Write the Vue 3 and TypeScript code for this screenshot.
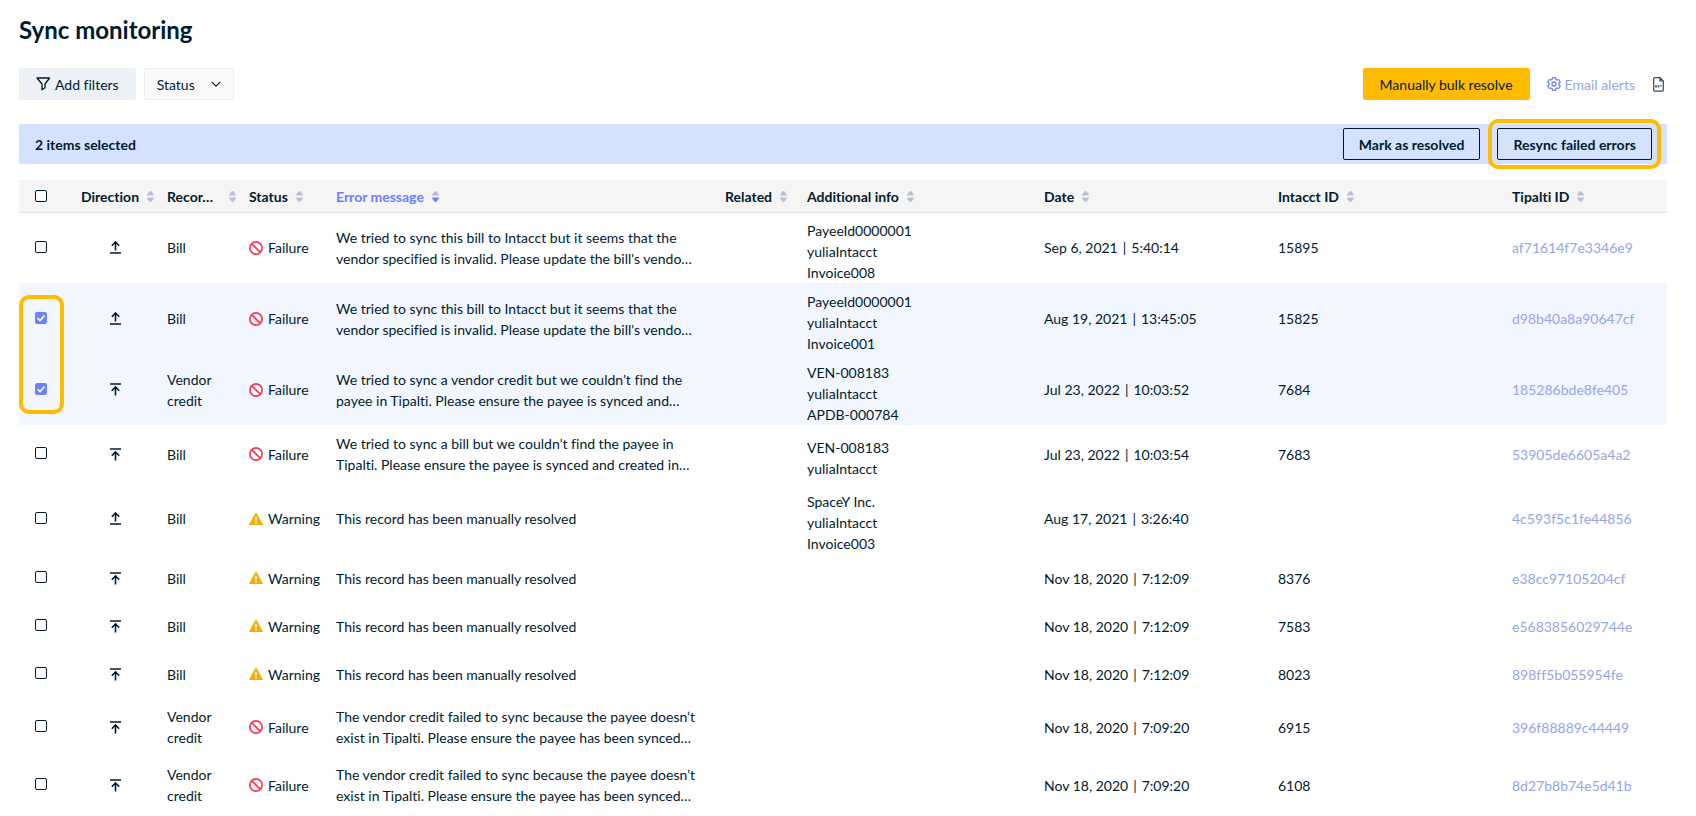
<script setup lang="ts">
import { computed, ref } from 'vue'

interface Row {
  checked: boolean
  direction: 'out' | 'in'
  record: string
  status: 'Failure' | 'Warning'
  message: string
  info: string[]
  date: string
  time: string
  intacct: string
  tipalti: string
}

interface Column {
  key: string
  label: string
  active?: boolean
}

const columns: Column[] = [
  { key: 'direction', label: 'Direction' },
  { key: 'record', label: 'Recor…' },
  { key: 'status', label: 'Status' },
  { key: 'message', label: 'Error message', active: true },
  { key: 'related', label: 'Related' },
  { key: 'info', label: 'Additional info' },
  { key: 'date', label: 'Date' },
  { key: 'intacct', label: 'Intacct ID' },
  { key: 'tipalti', label: 'Tipalti ID' },
]

const invalidVendor =
  "We tried to sync this bill to Intacct but it seems that the vendor specified is invalid. Please update the bill's vendo…"
const resolved = 'This record has been manually resolved'
const missingPayee =
  'The vendor credit failed to sync because the payee doesn’t exist in Tipalti. Please ensure the payee has been synced…'

const rows = ref<Row[]>([
  { checked: false, direction: 'out', record: 'Bill', status: 'Failure', message: invalidVendor, info: ['PayeeId0000001', 'yuliaIntacct', 'Invoice008'], date: 'Sep 6, 2021', time: '5:40:14', intacct: '15895', tipalti: 'af71614f7e3346e9' },
  { checked: true, direction: 'out', record: 'Bill', status: 'Failure', message: invalidVendor, info: ['PayeeId0000001', 'yuliaIntacct', 'Invoice001'], date: 'Aug 19, 2021', time: '13:45:05', intacct: '15825', tipalti: 'd98b40a8a90647cf' },
  { checked: true, direction: 'in', record: 'Vendor credit', status: 'Failure', message: 'We tried to sync a vendor credit but we couldn’t find the payee in Tipalti. Please ensure the payee is synced and…', info: ['VEN-008183', 'yuliaIntacct', 'APDB-000784'], date: 'Jul 23, 2022', time: '10:03:52', intacct: '7684', tipalti: '185286bde8fe405' },
  { checked: false, direction: 'in', record: 'Bill', status: 'Failure', message: 'We tried to sync a bill but we couldn’t find the payee in Tipalti. Please ensure the payee is synced and created in…', info: ['VEN-008183', 'yuliaIntacct'], date: 'Jul 23, 2022', time: '10:03:54', intacct: '7683', tipalti: '53905de6605a4a2' },
  { checked: false, direction: 'out', record: 'Bill', status: 'Warning', message: resolved, info: ['SpaceY Inc.', 'yuliaIntacct', 'Invoice003'], date: 'Aug 17, 2021', time: '3:26:40', intacct: '', tipalti: '4c593f5c1fe44856' },
  { checked: false, direction: 'in', record: 'Bill', status: 'Warning', message: resolved, info: [], date: 'Nov 18, 2020', time: '7:12:09', intacct: '8376', tipalti: 'e38cc97105204cf' },
  { checked: false, direction: 'in', record: 'Bill', status: 'Warning', message: resolved, info: [], date: 'Nov 18, 2020', time: '7:12:09', intacct: '7583', tipalti: 'e5683856029744e' },
  { checked: false, direction: 'in', record: 'Bill', status: 'Warning', message: resolved, info: [], date: 'Nov 18, 2020', time: '7:12:09', intacct: '8023', tipalti: '898ff5b055954fe' },
  { checked: false, direction: 'in', record: 'Vendor credit', status: 'Failure', message: missingPayee, info: [], date: 'Nov 18, 2020', time: '7:09:20', intacct: '6915', tipalti: '396f88889c44449' },
  { checked: false, direction: 'in', record: 'Vendor credit', status: 'Failure', message: missingPayee, info: [], date: 'Nov 18, 2020', time: '7:09:20', intacct: '6108', tipalti: '8d27b8b74e5d41b' },
])

const selectedCount = computed(() => rows.value.filter((r) => r.checked).length)
const allSelected = computed(() => selectedCount.value === rows.value.length)

function toggleAll(event: Event) {
  const checked = (event.target as HTMLInputElement).checked
  rows.value.forEach((r) => (r.checked = checked))
}
</script>

<template>
  <main class="page">
    <h1>Sync monitoring</h1>

    <div class="toolbar">
      <button type="button" class="btn filter">
        <svg width="15" height="14" viewBox="0 0 15 14" aria-hidden="true">
          <path d="M1 1h12.6L9 7v3.8l-3 2V7z" fill="none" stroke="currentColor" stroke-width="1.3" stroke-linejoin="round" />
        </svg>
        Add filters
      </button>
      <button type="button" class="btn dropdown">
        Status
        <svg width="10" height="6" viewBox="0 0 10 6" aria-hidden="true">
          <path d="M.7.8 5 5.1 9.3.8" fill="none" stroke="currentColor" stroke-width="1.1" />
        </svg>
      </button>
      <div class="actions">
        <button type="button" class="btn primary">Manually bulk resolve</button>
        <a href="#" class="alerts">
          <svg width="14" height="14" viewBox="0 0 14 14" fill="none" stroke="currentColor" stroke-width="1.3" stroke-linejoin="round" aria-hidden="true">
            <path d="M5.5.7h3l.4 1.7 1.1.6 1.700-.5 1.500 2.500-1.200 1.200v1.600l1.200 1.200-1.500 2.500-1.700-.5-1.100.600-.4 1.700h-3l-.4-1.700L4 11l-1.700.5L.8 9 2 7.800V6.200L.8 5l1.500-2.500L4 3l1.100-.6z" />
            <circle cx="7" cy="7" r="2" />
          </svg>
          Email alerts
        </a>
        <button type="button" class="export" aria-label="Export CSV">
          <svg width="11" height="15" viewBox="0 0 11 15" aria-hidden="true">
            <path d="M2 .7h5L10.3 4v9a1.2 1.2 0 0 1-1.2 1.2H2A1.2 1.2 0 0 1 .7 13V2A1.2 1.2 0 0 1 2 .7zM7 .7V4h3.300" fill="none" stroke="currentColor" stroke-width="1.2" stroke-linejoin="round" />
            <path d="M2.2 8.2h1.6v2.2H2.200zM4.700 8.200h1.600v2.200H4.700zM7.200 8.200h1.600L8 10.400z" fill="currentColor" />
          </svg>
        </button>
      </div>
    </div>

    <section class="selection" aria-label="Selection">
      <span class="count">{{ selectedCount }} items selected</span>
      <button type="button" class="btn outline">Mark as resolved</button>
      <div class="spot">
        <button type="button" class="btn outline">Resync failed errors</button>
      </div>
    </section>

    <div class="table-area">
      <table>
        <colgroup>
          <col class="c-check" />
          <col v-for="c in columns" :key="c.key" :class="'c-' + c.key" />
        </colgroup>
        <thead>
          <tr>
            <th class="check">
              <input type="checkbox" aria-label="Select all rows" :checked="allSelected" @change="toggleAll" />
            </th>
            <th v-for="c in columns" :key="c.key" :class="{ active: c.active }">
              <button type="button" class="sort" :class="'sort-' + c.key">
                <span>{{ c.label }}</span>
                <svg width="7" height="11" viewBox="0 0 7 11" aria-hidden="true">
                  <path class="up" d="M0 4.500C0 3.500 2.200 0 3.500 0S7 3.500 7 4.500z" />
                  <path class="down" d="M0 6.500C0 7.500 2.200 11 3.500 11S7 7.500 7 6.500z" />
                </svg>
              </button>
            </th>
          </tr>
        </thead>
        <tbody>
          <tr v-for="(r, i) in rows" :key="i" :class="{ selected: r.checked }">
            <td class="check">
              <input v-model="r.checked" type="checkbox" :aria-label="'Select row ' + (i + 1)" />
            </td>
            <td class="dir">
              <svg v-if="r.direction === 'out'" width="11" height="13" viewBox="0 0 11 13" aria-label="Outbound" role="img">
                <path d="M5.500 9.500V1.200M1.800 4.700l3.700-3.700 3.700 3.700M0 12h11" />
              </svg>
              <svg v-else width="11" height="13" viewBox="0 0 11 13" aria-label="Inbound" role="img">
                <path d="M5.500 12.500V4.200M1.800 7.700l3.700-3.700 3.700 3.700M0 1h11" />
              </svg>
            </td>
            <td class="record">{{ r.record }}</td>
            <td>
              <span class="status">
                <svg v-if="r.status === 'Failure'" width="14" height="14" viewBox="0 0 14 14" aria-hidden="true">
                  <g fill="none" stroke="#f73b55" stroke-width="1.7">
                    <circle cx="7" cy="7" r="6.1" />
                    <path d="m2.600 2.600 8.800 8.800" />
                  </g>
                </svg>
                <svg v-else width="14" height="14" viewBox="0 0 14 14" aria-hidden="true">
                  <path d="M6.200 1.400Q7 .2 7.800 1.400L13.700 11.800Q14.200 13 13 13H1Q-.2 13 .3 11.800z" fill="#f3af0b" />
                  <path d="M7 4.700v4M7 10v1.500" stroke="#fff" stroke-width="1.4" />
                </svg>
                {{ r.status }}
              </span>
            </td>
            <td class="message">{{ r.message }}</td>
            <td></td>
            <td class="info">
              <div v-for="line in r.info" :key="line">{{ line }}</div>
            </td>
            <td>{{ r.date }}<span class="bar">|</span>{{ r.time }}</td>
            <td>{{ r.intacct }}</td>
            <td><a href="#">{{ r.tipalti }}</a></td>
          </tr>
        </tbody>
      </table>
      <div class="ring"></div>
    </div>
  </main>
</template>

<style>
body {
  margin: 0;
  background: #fff;
}
</style>

<style scoped>
.page {
  box-sizing: border-box;
  padding: 14px 29px 0 19px;
  font: 14px/21px Lato, "Liberation Sans", sans-serif;
  font-variant-ligatures: none;
  color: #001b2e;
}

h1 {
  margin: 0;
  font-size: 24px;
  line-height: 32px;
  font-weight: 700;
}

button {
  margin: 0;
  padding: 0;
  border: 0;
  background: none;
  font: inherit;
  font-variant-ligatures: none;
  color: inherit;
  cursor: pointer;
}

a {
  color: #92a6ea;
  text-decoration: none;
}

svg {
  flex: none;
  display: block;
}

.toolbar {
  display: flex;
  align-items: center;
  gap: 8px;
  margin-top: 22px;
}

.btn {
  display: flex;
  align-items: center;
  box-sizing: border-box;
  height: 32px;
  padding: 0 17px;
  border-radius: 2px;
}

.filter {
  gap: 4px;
  background: #ebf1f6;
}

.dropdown {
  gap: 16px;
  padding: 0 12px;
  border: 1px solid #eee;
  background: #fafafa;
}

.actions {
  display: flex;
  align-items: center;
  margin-left: auto;
}

.primary {
  background: #ffbb00;
}

.alerts {
  display: flex;
  align-items: center;
  gap: 4px;
  margin: 0 18px 0 17px;
}

.alerts svg {
  color: #6b80ff;
}

.export {
  margin-right: 3px;
  color: #33495a;
}

.selection {
  display: flex;
  align-items: center;
  height: 40px;
  margin-top: 24px;
  padding: 0 16px;
  border-radius: 2px;
  background: #d4e2ff;
  font-weight: 700;
}

.count {
  flex: 1;
}

.outline {
  padding: 0 15px;
  border: 1px solid #001b2e;
}

.spot {
  margin: -5px -10px -5px 8px;
  padding: 5px;
  border: 4px solid #ffbb00;
  border-radius: 10px;
}

.table-area {
  position: relative;
  margin-top: 16px;
}

table {
  width: 100%;
  table-layout: fixed;
  border-collapse: collapse;
}

.c-check { width: 62px; }
.c-direction { width: 86px; }
.c-record { width: 82px; }
.c-status { width: 87px; }
.c-message { width: 389px; }
.c-related { width: 82px; }
.c-info { width: 237px; }
.c-date { width: 234px; }
.c-intacct { width: 234px; }
.c-tipalti { width: 155px; }

th {
  height: 32px;
  padding: 0;
  background: #f5f5f5;
  text-align: left;
  font-weight: 700;
}

.sort {
  display: flex;
  align-items: center;
  gap: 8px;
  text-align: left;
}

.sort-record span {
  min-width: 54px;
}

.sort path {
  fill: #bbbfd6;
}

.active .sort {
  color: #6b80ff;
}

.active .sort .down {
  fill: #6b80ff;
}

td {
  height: 32px;
  padding: 8px 0;
}

tbody tr:first-child td {
  box-shadow: inset 0 1px #e1e1e1;
}

.selected {
  background: #f2f7ff;
}

.check {
  padding-left: 16px;
}

td.check {
  padding-bottom: 10px;
  height: 30px;
}

.check input {
  display: block;
  appearance: none;
  box-sizing: border-box;
  width: 12px;
  height: 12px;
  margin: 0;
  border: 1px solid #001b2e;
  border-radius: 2px;
  background: #fff;
}

.check input:checked {
  border-color: #6b80ff;
  background: #6b80ff url("data:image/svg+xml,%3Csvg xmlns='http://www.w3.org/2000/svg' viewBox='0 0 10 10'%3E%3Cpath d='M1.500 5.200 4 7.500 8.500 2.500' fill='none' stroke='%23fff' stroke-width='1.600'/%3E%3C/svg%3E") center / 10px 10px no-repeat;
}

.dir svg {
  margin-left: 29px;
  fill: none;
  stroke: #001b2e;
  stroke-width: 1.6;
}

.record {
  padding-right: 12px;
}

.status {
  display: flex;
  align-items: center;
  gap: 5px;
}

.message {
  padding-right: 24px;
}

.info {
  padding-bottom: 0;
}

.bar {
  margin: 0 5px;
}

.ring {
  position: absolute;
  top: 115px;
  left: 0;
  box-sizing: border-box;
  width: 45px;
  height: 119px;
  border: 4px solid #ffbb00;
  border-radius: 10px;
}
</style>
